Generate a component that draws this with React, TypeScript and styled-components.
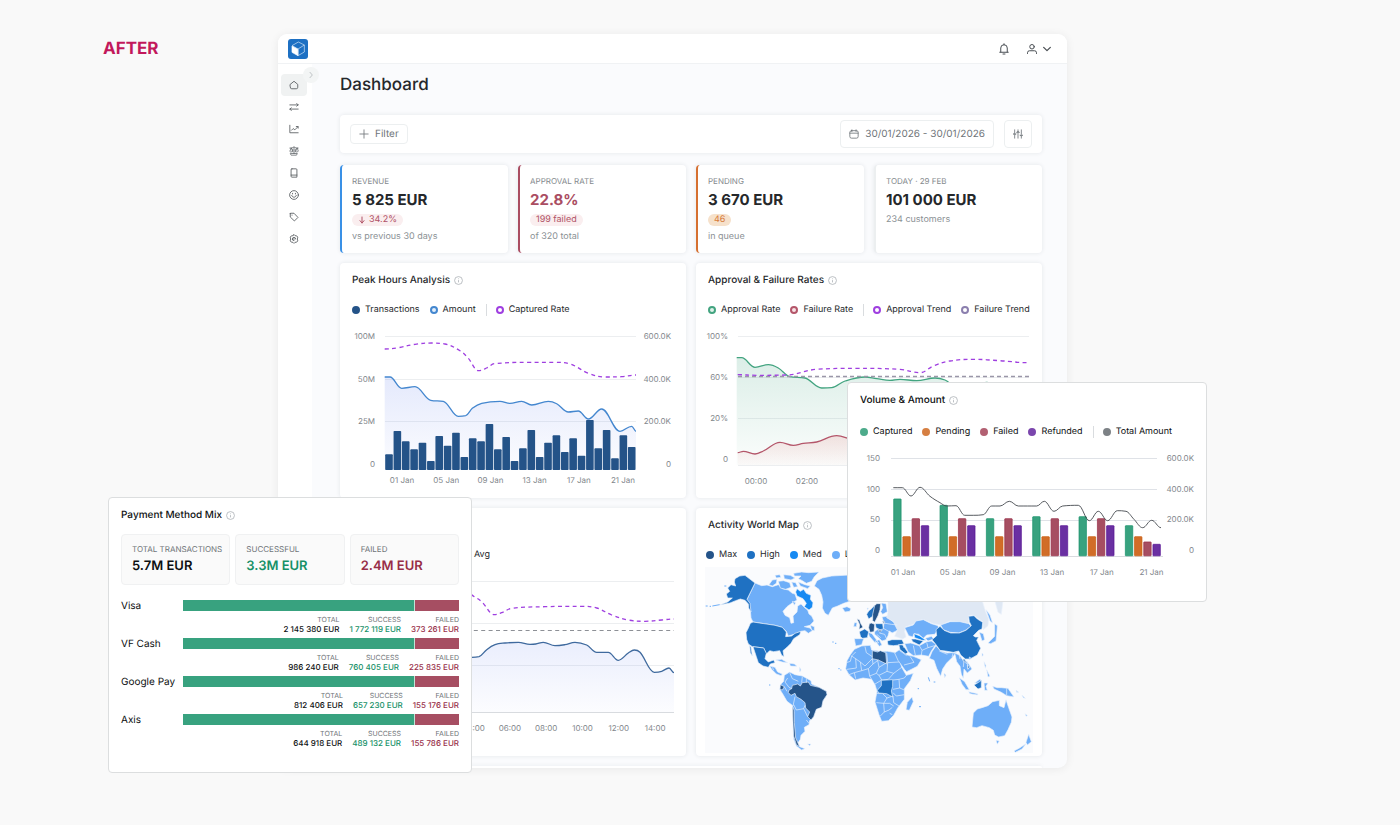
import React from "react";
import styled, { createGlobalStyle } from "styled-components";

const GlobalStyle = createGlobalStyle`
  *, *::before, *::after { box-sizing: border-box; }
  body {
    margin: 0;
    background: #f9f9f9;
    font-family: Inter, "Liberation Sans", sans-serif;
    color: #25282b;
    text-rendering: geometricPrecision;
  }
  h1, h2, p, ul, dl, dd { margin: 0; padding: 0; }
  ul { list-style: none; }
  button { font: inherit; color: inherit; cursor: pointer; text-rendering: inherit; }
  a { color: inherit; }
`;

/* ---------- page frame ---------- */

const Stage = styled.main`
  display: grid;
  grid-template-columns: 175px minmax(0, 1fr);
  padding: 34px 333px 57px 103px;
`;

const StageLabel = styled.p`
  padding-top: 4px;
  font-size: 17px;
  line-height: 22px;
  font-weight: 700;
  color: #c2185b;
`;

const Board = styled.div`
  position: relative;
`;

const AppWindow = styled.div`
  overflow: hidden;
  border-radius: 9px;
  background: #fafbfd;
  box-shadow: 0 1px 10px rgba(0, 0, 0, 0.07);
`;

const TopBar = styled.header`
  display: flex;
  align-items: center;
  justify-content: space-between;
  height: 30px;
  padding: 0 15px 0 10px;
  background: #fff;
  border-bottom: 1px solid #f0f2f4;
`;

const TopActions = styled.div`
  display: flex;
  align-items: center;
  gap: 16px;
`;

const PlainButton = styled.button`
  display: flex;
  align-items: center;
  gap: 4px;
  padding: 0;
  border: 0;
  background: none;
  color: #4a4f54;
`;

const Body = styled.div`
  display: grid;
  grid-template-columns: 34px minmax(0, 1fr);
`;

const Rail = styled.nav`
  position: relative;
  padding: 10px 3px;
  background: #fff;
`;

const RailList = styled.ul`
  display: grid;
`;

const RailLink = styled.a<{ $active?: boolean }>`
  display: flex;
  align-items: center;
  justify-content: center;
  width: 26px;
  height: 22px;
  border-radius: 4px;
  color: #54595d;
  background: ${(p) => (p.$active ? "#f0f2f2" : "transparent")};
`;

const RailToggle = styled.button`
  position: absolute;
  top: 3px;
  right: -7px;
  display: flex;
  align-items: center;
  justify-content: center;
  width: 16px;
  height: 16px;
  padding: 0;
  border: 0;
  border-radius: 50%;
  background: #f3f5f5;
  color: #a3a9ae;
`;

const Content = styled.div`
  padding: 10px 25px 0 28px;
`;

const PageTitle = styled.h1`
  margin-bottom: 19px;
  font-size: 17px;
  line-height: 22px;
  font-weight: 500;
`;

/* ---------- filter bar ---------- */

const surface = `
  background: #fff;
  border-radius: 4px;
  box-shadow: 0 0 4px rgba(30, 50, 70, 0.1);
`;

const FilterBar = styled.div`
  ${surface}
  display: flex;
  align-items: center;
  gap: 10px;
  height: 38px;
  margin-bottom: 12px;
  padding: 0 10px;
`;

const FilterButton = styled.button<{ $tall?: boolean; $push?: boolean }>`
  display: flex;
  align-items: center;
  gap: 6px;
  height: ${(p) => (p.$tall ? 28 : 20)}px;
  margin-left: ${(p) => (p.$push ? "auto" : 0)};
  padding: 0 8px;
  border: 1px solid #eceff0;
  border-radius: 4px;
  background: #fff;
  font-size: 10px;
  line-height: 14px;
  color: #6f7579;
`;

/* ---------- figures ---------- */

const KpiGrid = styled.section`
  display: grid;
  grid-template-columns: repeat(4, minmax(0, 1fr));
  gap: 10px;
  margin-bottom: 10px;
`;

const KpiCard = styled.article<{ $accent: string }>`
  ${surface}
  height: 88px;
  padding: 10px 10px 0;
  border-left: 2px solid ${(p) => p.$accent};
`;

const KpiLabel = styled.p`
  font-size: 8px;
  line-height: 12px;
  color: #84898d;
`;

const KpiValue = styled.p<{ $tone?: string }>`
  margin: 4px 0 5px;
  font-size: 15px;
  line-height: 18px;
  font-weight: 700;
  color: ${(p) => p.$tone ?? "#25282b"};
`;

const KpiPill = styled.span<{ $bg: string; $tone: string }>`
  display: flex;
  align-items: center;
  gap: 3px;
  width: fit-content;
  height: 12px;
  margin-bottom: 5px;
  padding: 0 6px;
  border-radius: 6px;
  font-size: 9px;
  line-height: 12px;
  background: ${(p) => p.$bg};
  color: ${(p) => p.$tone};
`;

const KpiNote = styled.p`
  font-size: 9px;
  line-height: 12px;
  color: #8b9195;
`;

/* ---------- cards ---------- */

const CardGrid = styled.section`
  display: grid;
  grid-template-columns: repeat(2, minmax(0, 1fr));
  gap: 10px;
`;

const Card = styled.article`
  ${surface}
  min-width: 0;
  padding-bottom: 8px;
`;

const MapCard = styled(Card)`
  padding-bottom: 3px;
`;

const NextRow = styled.div`
  ${surface}
  height: 2px;
  margin-top: 10px;
  border-radius: 4px 4px 0 0;
`;

const CardTitle = styled.h2`
  display: flex;
  align-items: center;
  gap: 4px;
  padding: 10px 12px 0;
  font-size: 10px;
  line-height: 14px;
  font-weight: 500;
  color: inherit;
`;

const LegendList = styled.ul<{ $inset?: number; $roomy?: boolean }>`
  display: flex;
  align-items: center;
  gap: 10px;
  padding: ${(p) => (p.$roomy ? "18px" : "16px")} ${(p) => p.$inset ?? 12}px 9px;
  font-size: 9px;
  line-height: 14px;
  white-space: nowrap;
`;

const LegendItem = styled.li<{ $split?: boolean }>`
  display: flex;
  align-items: center;
  gap: 5px;
  ${(p) =>
    p.$split &&
    `
    &::before {
      content: "";
      width: 1px;
      height: 12px;
      margin-right: 4px;
      background: #d9dcdf;
    }
  `}
`;

const Dot = styled.span<{ $color: string; $ring?: string }>`
  width: 8px;
  height: 8px;
  border-radius: 50%;
  border: 2px solid ${(p) => p.$color};
  background: ${(p) => p.$ring ?? p.$color};
`;

const Plot = styled.svg`
  display: block;
  width: 100%;
  height: auto;
`;

const AxisText = styled.text`
  font-size: 8px;
  fill: #81868b;
  dominant-baseline: central;
`;

const MapFrame = styled.div`
  margin-top: -4px;
  padding: 0 9px;
`;

const Overlay = styled.article`
  position: absolute;
  border: 1px solid #dcdedf;
  border-radius: 4px;
  background: #fff;
  color: #0d0f11;
`;

const VolumeOverlay = styled(Overlay)`
  top: 348px;
  right: -140px;
  width: 360px;
  padding-bottom: 15px;
`;

const PaymentOverlay = styled(Overlay)`
  top: 463px;
  left: -170px;
  width: 364px;
  height: 276px;
`;

/* ---------- payment mix ---------- */

const StatRow = styled.div`
  display: grid;
  grid-template-columns: repeat(3, minmax(0, 1fr));
  gap: 5px;
  padding: 12px 12px 15px;
`;

const Stat = styled.div`
  height: 51px;
  padding: 8px 10px;
  border: 1px solid #f0f1f2;
  border-radius: 4px;
  background: #fafafa;
`;

const StatLabel = styled.p`
  margin-bottom: 3px;
  font-size: 8px;
  line-height: 12px;
  color: #6f7478;
  white-space: nowrap;
`;

const StatValue = styled.p<{ $tone: string }>`
  font-size: 13px;
  line-height: 16px;
  font-weight: 600;
  color: ${(p) => p.$tone};
`;

const MethodRow = styled.li`
  display: grid;
  grid-template-columns: 62px minmax(0, 1fr);
  height: 38px;
  padding: 0 12px;
`;

const MethodName = styled.span`
  font-size: 10px;
  line-height: 12px;
`;

const Bar = styled.div`
  display: flex;
  gap: 1px;
  height: 11px;
  background: #bfe3d5;
`;

const BarPart = styled.span<{ $color: string }>`
  background: ${(p) => p.$color};
`;

const Amounts = styled.dl`
  display: flex;
  justify-content: flex-end;
  gap: 10px;
  padding-top: 4px;
  text-align: right;
`;

const AmountLabel = styled.dt`
  font-size: 7px;
  line-height: 10px;
  color: #6f7478;
`;

const AmountValue = styled.dd<{ $tone: string }>`
  font-size: 8px;
  line-height: 9px;
  font-weight: 500;
  color: ${(p) => p.$tone};
`;

/* ---------- icons ---------- */

const Icon = ({ size = 10, weight = 2, children }: { size?: number; weight?: number; children: React.ReactNode }) => (
  <svg width={size} height={size} viewBox="0 0 24 24" fill="none" stroke="currentColor" strokeWidth={weight} strokeLinecap="round" strokeLinejoin="round" aria-hidden="true">
    {children}
  </svg>
);

const InfoIcon = () => (
  <svg width="9" height="9" viewBox="0 0 24 24" fill="none" stroke="#a7acb1" strokeWidth="2" aria-hidden="true">
    <circle cx="12" cy="12" r="10.5" />
    <path d="M12 11v6M12 6.5v2" />
  </svg>
);

const Logo = () => (
  <svg width="20" height="20" viewBox="0 0 60 60" aria-label="Home" role="img">
    <rect width="60" height="60" rx="9" fill="#1d70c3" />
    <path d="M12 21 30 31v19L12 40Z" fill="#fff" stroke="#fff" strokeWidth="2" strokeLinejoin="round" />
    <path d="M12 20 31 9l18 9v21L30 50V30l19-12M12 20l18 10" fill="none" stroke="#d6e7f8" strokeWidth="2" strokeLinejoin="round" />
  </svg>
);

const railIcons: { name: string; art: React.ReactNode }[] = [
  { name: "Dashboard", art: <path d="M3 10.500 12 3l9 7.500v7a3.500 3.500 0 0 1-3.500 3.500h-11A3.500 3.500 0 0 1 3 17.500Z" /> },
  { name: "Transfers", art: <path d="M2 7h20M18.500 3.500 22 7l-3.500 3M22 17H2M5.500 14 2 17l3.500 3.500" /> },
  { name: "Analytics", art: <path d="M2 3v18h20M6 15l4-4 4 3 7-7M17.500 6H22v4" /> },
  {
    name: "Balances",
    art: <path d="M2 5h5l5-3 5 3h5M5 5l-3 8c1 2 5 2 6 0ZM19 5l-3 8c1 2 5 2 6 0ZM12 3v15M4 18h16l-2 4H6ZM9 8v6M15 8v6" strokeWidth="1.7" />,
  },
  { name: "Ledger", art: <path d="M7 2h10a2 2 0 0 1 2 2v18H7a2 2 0 0 1-2-2V4a2 2 0 0 1 2-2ZM5 17h14" /> },
  {
    name: "Customers",
    art: (
      <>
        <circle cx="12" cy="12" r="10.5" />
        <path d="M6.500 13c1.500 6 9.500 6 11 0M8.500 8v1.500M15.500 8v1.500" />
      </>
    ),
  },
  { name: "Offers", art: <path d="M3 4v8l10 9.500 8.500-8.500L12 3H4a1 1 0 0 0-1 1ZM7 7.500h.5" /> },
  {
    name: "Settings",
    art: (
      <>
        <path d="M12 1.500 14.500 4l4 .5 2.500 3-1 4.500 1 4.500-2.500 3-4 .5L12 22.500 9.500 20l-4-.5-2.500-3 1-4.500-1-4.500 2.500-3 4-.5Z" />
        <path d="M8 12a4 4 0 0 1 8 0M12 16a4 4 0 0 1-4-4h5" />
      </>
    ),
  },
];

/* ---------- chart helpers ---------- */

type Pt = [number, number];

// Series are stored at three units per pixel and shifted into the plot's own space.
const place = (pts: Pt[], dx: number, dy: number): Pt[] => pts.map(([x, y]) => [x / 3 + dx, y / 3 + dy]);

// Smooth path whose control points stay level at every local extreme.
const curve = (pts: Pt[]) => {
  const n = pts.length;
  const slope = pts.map((p, i) => {
    if (i === 0 || i === n - 1) return 0;
    const a = (p[1] - pts[i - 1][1]) / (p[0] - pts[i - 1][0]);
    const b = (pts[i + 1][1] - p[1]) / (pts[i + 1][0] - p[0]);
    if (a * b <= 0) return 0;
    const mean = (pts[i + 1][1] - pts[i - 1][1]) / (pts[i + 1][0] - pts[i - 1][0]);
    return Math.sign(mean) * Math.min(Math.abs(mean), 2.500 * Math.abs(a), 2.500 * Math.abs(b));
  });
  let d = `M${pts[0][0].toFixed(1)} ${pts[0][1].toFixed(1)}`;
  for (let i = 1; i < n; i++) {
    const [x0, y0] = pts[i - 1];
    const [x1, y1] = pts[i];
    const h = (x1 - x0) * 0.38;
    d += `C${(x0 + h).toFixed(1)} ${(y0 + slope[i - 1] * h).toFixed(1)} ${(x1 - h).toFixed(1)} ${(y1 - slope[i] * h).toFixed(1)} ${x1.toFixed(1)} ${y1.toFixed(1)}`;
  }
  return d;
};

const area = (pts: Pt[], base: number) => `${curve(pts)}V${base}H${pts[0][0].toFixed(1)}Z`;

const Fade = ({ id, color, from }: { id: string; color: string; from: number }) => (
  <linearGradient id={id} x1="0" y1="0" x2="0" y2="1">
    <stop offset="0" stopColor={color} stopOpacity={from} />
    <stop offset="1" stopColor={color} stopOpacity="0.02" />
  </linearGradient>
);

const Grid = ({ x1, x2, ys, color = "#eceef0" }: { x1: number; x2: number; ys: number[]; color?: string }) => (
  <g stroke={color}>
    {ys.map((y) => (
      <path key={y} d={`M${x1} ${y}H${x2}`} />
    ))}
  </g>
);

const Axis = ({ labels, x, y, dx = 0, dy = 0, anchor = "end" }: { labels: string[]; x: number; y: number; dx?: number; dy?: number; anchor?: "end" | "middle" }) => (
  <>
    {labels.map((label, i) => (
      <AxisText key={label} x={x + dx * i} y={y + dy * i} textAnchor={anchor}>
        {label}
      </AxisText>
    ))}
  </>
);

const days = ["01 Jan", "05 Jan", "09 Jan", "13 Jan", "17 Jan", "21 Jan"];

/* ---------- Peak hours ---------- */

const peakBars = [583, 513, 544, 568, 548, 603, 528, 557, 518, 591, 535, 544, 492, 568, 531, 603, 565, 510, 591, 548, 526, 576, 535, 587, 480, 565, 510, 595, 526, 561];

const amountLine = place(
  [[149, 351], [165, 351], [200, 385], [240, 380], [287, 421], [325, 424], [370, 469], [392, 467], [412, 445], [440, 430], [495, 424], [525, 430], [560, 424], [590, 435], [640, 424], [665, 431], [700, 456], [730, 453], [760, 477], [800, 447], [855, 514], [890, 499], [903, 514]],
  -5,
  -66,
);

const capturedLine = place(
  [[149, 267], [190, 263], [240, 253], [290, 249], [330, 252], [375, 272], [400, 295], [430, 332], [455, 324], [478, 311], [580, 307], [660, 307], [705, 312], [760, 340], [810, 351], [860, 350], [903, 345]],
  -5,
  -66,
);

const PeakChart = () => (
  <Plot viewBox="0 0 346 164" role="img" aria-label="Peak hours chart">
    <defs>
      <Fade id="peak-fill" color="#5877ec" from={0.16} />
    </defs>
    <Grid x1={45} x2={296} ys={[10.5, 53.5, 95.5]} />
    <path d={area(amountLine, 144)} fill="url(#peak-fill)" />
    {peakBars.map((top, i) => (
      <rect key={i} x={45.2 + i * 8.37} y={top / 3 - 66} width="7.6" height={210 - top / 3} rx="0.8" fill="#245388" />
    ))}
    <path d={curve(amountLine)} fill="none" stroke="#4487cf" strokeWidth="1.3" />
    <path d={curve(capturedLine)} fill="none" stroke="#9f3fe0" strokeWidth="1.3" strokeDasharray="4 3.4" />
    <Axis labels={["100M", "50M", "25M", "0"]} x={35} y={10} dy={42.5} />
    <Axis labels={["600.0K", "400.0K", "200.0K", "0"]} x={331} y={10} dy={42.5} />
    <Axis labels={days} x={62} y={154} dx={44.2} anchor="middle" />
  </Plot>
);

/* ---------- Approval and failure ---------- */

const approvalLine = place(
  [[140, 293], [155, 293], [195, 322], [235, 314], [265, 324], [300, 350], [345, 354], [395, 384], [425, 383], [465, 363], [525, 351], [560, 356], [600, 361], [630, 358], [680, 362], [735, 354], [765, 360], [790, 376], [840, 390], [890, 367], [940, 390], [1017, 410]],
  -6,
  -66,
);

const failureLine = place(
  [[143, 578], [160, 574], [195, 582], [220, 573], [270, 547], [310, 556], [340, 550], [380, 546], [440, 527], [480, 537], [560, 560], [700, 550], [1017, 570]],
  -6,
  -66,
);

const approvalTrend = place(
  [[143, 344], [200, 346], [290, 345], [380, 328], [500, 325], [630, 328], [690, 338], [730, 318], [780, 303], [850, 298], [930, 302], [1017, 308]],
  -6,
  -66,
);

const RatesChart = () => (
  <Plot viewBox="0 0 346 164" role="img" aria-label="Approval and failure rates chart">
    <defs>
      <Fade id="approval-fill" color="#2d9a72" from={0.17} />
      <Fade id="failure-fill" color="#e04b4b" from={0.14} />
    </defs>
    <Grid x1={42} x2={333} ys={[10.5, 51.5, 92.5, 139.5]} />
    <path d={area(approvalLine, 139)} fill="url(#approval-fill)" />
    <path d={area(failureLine, 139)} fill="url(#failure-fill)" />
    <path d={curve(approvalLine)} fill="none" stroke="#43a480" strokeWidth="1.3" />
    <path d={curve(failureLine)} fill="none" stroke="#b4566a" strokeWidth="1.3" />
    <path d="M42 50.500H333" stroke="#9a96a8" strokeWidth="1.3" strokeDasharray="4 3" />
    <path d={curve(approvalTrend)} fill="none" stroke="#9f3fe0" strokeWidth="1.3" strokeDasharray="4 3.4" />
    <Axis labels={["100%", "60%", "20%", "0"]} x={32} y={10} dy={41} />
    <Axis labels={["00:00", "02:00"]} x={60} y={155} dx={51} anchor="middle" />
  </Plot>
);

/* ---------- Hourly traffic ---------- */

const trafficLine = place(
  [[-240, 350], [-160, 380], [-80, 424], [-20, 460], [0, 470], [20, 472], [42, 470], [65, 449], [90, 434], [120, 429], [160, 427], [195, 433], [212, 432], [235, 427], [270, 437], [300, 434], [330, 427], [365, 435], [395, 457], [430, 457], [460, 481], [490, 459], [508, 450], [525, 457], [568, 517], [590, 514], [612, 504], [627, 518]],
  125,
  -71,
);

const trafficTrend = place(
  [[-240, 267], [-80, 250], [0, 272], [28, 290], [50, 305], [88, 344], [110, 338], [140, 325], [240, 320], [350, 319], [395, 324], [440, 345], [490, 360], [540, 364], [590, 360], [627, 357]],
  125,
  -71,
);

const TrafficChart = () => (
  <Plot viewBox="0 0 346 170" role="img" aria-label="Hourly traffic chart">
    <Grid x1={45} x2={334} ys={[10.5, 52.5, 94.5]} />
    <Grid x1={45} x2={334} ys={[141.5]} color="#d8dbdf" />
    <path d={area(trafficLine, 141)} fill="url(#peak-fill)" />
    <path d="M45 59.500H334" stroke="#8d9096" strokeWidth="1.2" strokeDasharray="4 3.4" />
    <path d={curve(trafficLine)} fill="none" stroke="#3f6a9e" strokeWidth="1.3" />
    <path d={curve(trafficTrend)} fill="none" stroke="#9f3fe0" strokeWidth="1.3" strokeDasharray="4 3.4" />
    <Axis labels={["04:00", "06:00", "08:00", "10:00", "12:00", "14:00"]} x={133.6} y={157} dx={36.3} anchor="middle" />
  </Plot>
);

/* ---------- Volume ---------- */

const volumeBars: { color: string; edge: string; tops: number[] }[] = [
  { color: "#38a27f", edge: "#17906a", tops: [371, 390, 430, 424, 424, 451] },
  { color: "#d16d28", edge: "#c95a0c", tops: [484, 484, 484, 484, 484, 484] },
  { color: "#a64e62", edge: "#982e48", tops: [430, 430, 430, 430, 430, 500] },
  { color: "#6a30a2", edge: "#571293", tops: [451, 451, 451, 451, 451, 507] },
];

const totalLine = place(
  [[160, 338], [187, 338], [213, 363], [240, 337], [270, 364], [300, 383], [320, 393], [348, 392], [374, 421], [400, 421], [430, 419], [455, 393], [480, 393], [508, 379], [535, 393], [590, 393], [613, 379], [642, 409], [668, 393], [715, 391], [748, 437], [775, 409], [803, 437], [832, 407], [858, 409], [882, 433], [908, 458], [935, 436], [963, 458]],
  -8,
  -73,
);

const VolumeChart = () => (
  <Plot viewBox="0 0 358 138" role="img" aria-label="Volume and amount chart">
    <Grid x1={43} x2={309} ys={[10.5, 41.5, 72.5]} color="#dfe2e7" />
    <path d="M43 108.500H315" stroke="#d9dbdf" />
    {volumeBars.map((series, s) =>
      series.tops.map((top, g) => (
        <rect key={`${s}-${g}`} x={45.7 + g * 46.33 + s * 9.2} y={top / 3 - 72.7} width="7.4" height={180.5 - top / 3} rx="0.5" fill={series.color} stroke={series.edge} strokeWidth="0.7" />
      )),
    )}
    <path d={curve(totalLine)} fill="none" stroke="#44484e" strokeWidth="0.9" />
    <Axis labels={["150", "100", "50", "0"]} x={32} y={10} dy={30.6} />
    <Axis labels={["600.0K", "400.0K", "200.0K", "0"]} x={346} y={10} dy={30.6} />
    <Axis labels={days} x={55} y={124} dx={49.7} anchor="middle" />
  </Plot>
);

/* ---------- World map ---------- */

const low = "#6eaef8";
const med = "#178af2";
const high = "#1f71c2";
const max = "#255489";
const none = "#dfe8f4";

const westShapes: [string, string][] = [
  // Canada, its arctic islands, Greenland, Iceland
  [low, "M180 231 200 239 216 237 232 242 250 236 262 248 280 252 292 262 300 264 306 282 290 292 276 302 264 316 270 328 284 335 288 352 296 350 294 330 306 318 308 300 318 294 330 306 338 312 342 324 350 330 357 345 345 358 328 362 345 366 352 374 340 382 330 374 318 376 300 384 280 390 274 376 262 364 240 358 174 348 168 336 166 312 160 290 156 280Z"],
  [low, "M222 236 232 222 246 220 244 232 232 240ZM250 226 266 224 284 230 288 244 272 250 256 246ZM240 208 254 206 258 214 244 216ZM266 206 286 208 300 216 288 222 268 218ZM290 228 302 230 308 242 296 244ZM296 202 320 198 340 200 372 198 358 212 350 226 334 232 322 224 310 218 318 210 298 210ZM310 228 330 236 346 240 338 248 316 240ZM292 286 302 290 298 298Z"],
  [low, "M358 240 366 224 382 216 410 210 500 205 490 262 470 284 446 292 428 300 412 306 400 328 390 322 382 306 384 288 380 268 372 250Z"],
  [low, "M442 306 456 302 468 308 464 316 450 318ZM346 358 358 362 358 374 350 372Z"],
  [med, "M306 248 316 256 326 250 334 262 348 268 346 280 354 290 352 304 342 312 328 302 334 292 324 278 306 270 302 258Z"],
  // Alaska, United States, Mexico, Central America
  [high, "M120 218 134 210 150 208 180 231 156 280 165 292 168 318 161 306 160 294 150 283 136 279 122 284 105 291 74 297 98 288 112 276 98 276 94 264 104 256 98 246 108 236 122 240 118 228Z"],
  [high, "M174 348 240 358 262 364 274 378 272 392 290 390 300 382 318 376 314 386 296 398 288 412 276 424 264 434 267 452 260 448 254 434 236 437 224 434 214 444 206 426 190 424 172 422 160 414 155 400 153 380 160 366 166 352Z"],
  [high, "M164 418 168 424 172 450 166 440ZM174 422 206 426 214 442 210 458 220 468 236 462 240 470 226 474 220 484 204 480 190 470 184 452Z"],
  [low, "M224 480 240 484 248 498 262 504 258 509 244 504 230 490ZM242 462 260 460 278 470 262 468ZM284 472 298 474 306 481 286 480ZM314 484 318 492 314 498Z"],
  // South America
  [low, "M268 508 284 498 300 506 322 510 348 524 350 534 372 544 394 556 396 566 384 584 380 600 364 610 356 632 344 644 342 656 328 664 330 676 318 688 316 700 308 712 314 722 330 728 320 732 304 720 296 700 294 660 296 620 292 598 276 586 262 562 254 550 258 534 266 526ZM338 714 348 714 344 719Z"],
  [max, "M292 538 308 534 316 540 322 530 340 528 346 538 372 544 394 556 396 566 384 584 380 604 364 610 356 632 348 642 338 632 344 618 332 606 330 590 318 580 304 572 300 562 288 568 280 560 282 552 290 548Z"],
  [max, "M292 600 297 612 298 650 302 696 314 722 304 716 296 690 294 650ZM256 536 268 542 262 552 255 550Z"],
  // Western Europe
  [max, "M486 338 494 342 496 350 504 364 492 370 494 356Z"],
  [low, "M478 350 486 350 484 362 476 362ZM478 398 506 398 500 416 482 420ZM516 306 520 306 518 312Z"],
  // Africa
  [low, "M478 430 500 420 526 418 530 432 556 436 578 436 604 440 612 456 620 484 634 508 655 502 646 524 628 548 628 580 608 606 596 628 580 644 560 646 552 626 540 588 546 556 540 536 530 520 504 516 480 522 462 506 452 488 456 464 466 446Z"],
  [max, "M532 434 548 438 556 434 572 440 575 474 550 462 532 458Z"],
];

const eastShapes: [string, string][] = [
  [high, "M64 268 98 266 98 286 94 300 98 318 80 308 56 306 52 298 64 284Z"],
  [low, "M156 318 160 332 148 358 138 356 142 334Z"],
  // Northern and central Europe
  [high, "M20 70 26 60 36 52 44 42 48 48 38 76 26 84Z"],
  [max, "M44 44 50 38 62 38 60 56 54 74 44 94 38 88 38 70Z"],
  [low, "M64 36 78 38 82 62 68 70 62 62 68 50ZM66 78 80 76 90 84 100 92 112 100 116 116 104 122 96 126 88 120 84 134 78 146 66 150 58 142 44 130 44 122 54 114 70 112 72 96ZM24 124 36 128 46 142 56 156 44 154 28 136ZM46 150 58 146 66 162 58 166Z"],
  [max, "M28 98 34 96 44 100 42 122 30 124 26 110ZM54 118 66 118 60 124ZM66 90 74 92 72 98Z"],
  [high, "M46 98 68 98 70 114 60 116 48 110ZM-2 122 14 114 26 122 22 140 8 142 2 138Z"],
  // Russia
  [none, "M84 20 364 20 376 60 386 84 384 104 370 116 368 92 340 72 326 74 326 98 290 92 270 90 244 102 220 98 190 86 170 90 160 100 136 108 134 122 138 138 128 144 104 136 112 116 100 92 80 80 84 64ZM402 20 430 20 424 70 414 64Z"],
  // Middle East and Central Asia
  [high, "M82 150 96 146 126 146 132 158 118 162 100 164 84 162ZM116 160 128 162 144 184 136 190 120 176Z"],
  [low, "M134 110 160 102 168 90 190 86 214 98 234 104 236 114 224 130 200 132 190 142 176 130 162 128 158 138 146 134ZM134 158 152 156 178 164 200 152 214 150 228 160 214 180 206 196 184 192 160 194 144 182ZM104 186 118 176 142 192 160 196 184 206 172 226 140 242 134 236 114 208ZM196 142 214 136 222 144 204 150Z"],
  [med, "M162 128 178 134 198 148 186 148 164 140Z"],
  [high, "M154 144 166 144 190 150 178 162 158 152Z"],
  [low, "M228 164 242 180 262 186 290 184 276 200 260 216 248 234 242 256 230 232 222 208 208 202 216 182ZM252 246 258 252 254 260Z"],
  // East Asia
  [low, "M242 102 270 92 300 92 326 98 334 106 316 118 296 126 270 124 250 116Z"],
  [high, "M240 106 252 118 272 126 298 126 318 118 334 104 328 92 326 76 342 74 352 84 368 94 366 114 356 118 340 134 346 138 356 138 350 148 362 172 352 192 330 204 316 204 302 192 296 180 280 184 256 180 240 178 226 158 216 146 230 134 228 116Z"],
  [low, "M358 124 370 128 374 146 366 150ZM404 98 412 104 410 132 408 150 392 158 384 156 404 136ZM378 56 390 72 398 96 390 90Z"],
  [low, "M284 186 298 192 308 206 322 212 336 234 322 246 312 234 310 262 304 250 300 226 290 212ZM298 260 314 272 328 296 318 296 306 280ZM326 302 352 308 354 312 330 308ZM372 212 378 224 376 232ZM380 236 390 256 384 258ZM372 276 384 276 378 286 382 298 374 298ZM398 286 412 290 424 290 444 292 462 318 440 314 424 304 402 294ZM344 276 360 264 366 276Z"],
  [high, "M342 282 356 274 364 268 364 290 354 294ZM306 206 314 204 320 218ZM322 222 330 228 324 234Z"],
  // Oceania
  [low, "M340 366 352 354 366 350 384 344 398 332 418 328 418 344 432 350 438 326 446 350 456 378 454 394 444 416 434 434 416 438 404 432 400 418 388 410 366 404 350 410 336 408ZM408 448 418 450 412 460ZM506 430 514 452 502 462 498 454ZM498 458 486 474 466 484 462 480 480 470ZM468 298 476 304 470 304ZM486 312 496 322 490 320ZM496 368 502 374 498 376ZM328 198 334 202 328 206ZM366 186 370 192 366 196Z"],
];

const borders =
  "M284 500 292 518 310 526M278 516 270 528 282 544 290 548M322 512 320 530M334 518 334 530M268 542 276 556M300 572 294 600M296 596 304 612 326 608 330 598M326 608 338 632M334 642 342 652M232 484 236 492" +
  "M482 438 470 450 466 466 454 470M470 450 496 468 510 480 532 458M510 422 514 440 532 452M482 458 484 486 456 490M496 468 500 494 478 500 482 518M462 506 478 500M500 494 520 488 534 474 532 458M520 488 524 510 530 520M534 474 550 462M524 510 544 502 552 484 548 464M575 470 552 484M575 440 578 470 612 468M578 470 576 496 596 502 612 490 620 484M552 508 576 496M540 534 560 522 552 508 544 502M560 522 580 520 596 502M594 522 612 520 628 516 634 508M612 520 614 546 628 552M614 546 594 550M594 560 604 570 628 566M594 570 596 590 612 600M544 562 562 562 576 576 594 570M544 590 566 592 576 576M566 592 568 618 556 630M566 592 584 592 596 600M568 618 582 612 592 604M584 622 592 626";

const asiaBorders =
  "M160 164 166 192M178 164 186 178 184 192M200 154 204 170 186 178M204 170 224 164M118 178 140 194M132 222 162 214M150 196 162 214M296 186 300 204M312 206 310 228M322 212 324 236M440 292V312M224 130 206 136M134 160 130 170M70 112 84 120 96 126M58 126 74 130 80 144M70 96 94 100 112 102M50 130 62 140M280 184 276 198M238 180 262 190";

const WorldMap = () => (
  <Plot viewBox="30 183 984 558" role="img" aria-label="World map of activity">
    <rect x="30" y="183" width="984" height="558" fill="#fafbfd" />
    <g stroke="#eaf2fc" strokeWidth="2" strokeLinejoin="round">
      {westShapes.map(([fill, d], i) => (
        <path key={i} d={d} fill={fill} />
      ))}
      <path d={borders} fill="none" />
      <g transform="translate(495 255)">
        {eastShapes.map(([fill, d], i) => (
          <path key={i} d={d} fill={fill} />
        ))}
        <path d={asiaBorders} fill="none" />
      </g>
    </g>
    <path d="M32 300h6M44 301h4M52 300l22-4M88 240h6M222 537h4M412 408h4M420 412h4M430 488h4M436 492h3M700 514l4 12M716 528h5M668 548h4M672 602h6" stroke={low} strokeWidth="3" fill="none" />
  </Plot>
);

/* ---------- content ---------- */

type LegendEntry = { label: string; color: string; ring?: string; split?: boolean };

const Legend = ({ items, inset, roomy }: { items: LegendEntry[]; inset?: number; roomy?: boolean }) => (
  <LegendList $inset={inset} $roomy={roomy}>
    {items.map((item) => (
      <LegendItem key={item.label} $split={item.split}>
        <Dot $color={item.color} $ring={item.ring} />
        {item.label}
      </LegendItem>
    ))}
  </LegendList>
);

const Title = ({ children }: { children: React.ReactNode }) => (
  <CardTitle>
    {children}
    <InfoIcon />
  </CardTitle>
);

const stats = [
  { label: "TOTAL TRANSACTIONS", value: "5.7M EUR", tone: "#0d0f11" },
  { label: "SUCCESSFUL", value: "3.3M EUR", tone: "#159067" },
  { label: "FAILED", value: "2.4M EUR", tone: "#982e48" },
];

const methods = [
  { name: "Visa", total: "2 145 380 EUR", success: "1 772 119 EUR", failed: "373 261 EUR", share: 84 },
  { name: "VF Cash", total: "986 240 EUR", success: "760 405 EUR", failed: "225 835 EUR", share: 84 },
  { name: "Google Pay", total: "812 406 EUR", success: "657 230 EUR", failed: "155 176 EUR", share: 84 },
  { name: "Axis", total: "644 918 EUR", success: "489 132 EUR", failed: "155 786 EUR", share: 84 },
];

const PaymentMix = () => (
  <PaymentOverlay>
    <Title>Payment Method Mix</Title>
    <StatRow>
      {stats.map((s) => (
        <Stat key={s.label}>
          <StatLabel>{s.label}</StatLabel>
          <StatValue $tone={s.tone}>{s.value}</StatValue>
        </Stat>
      ))}
    </StatRow>
    <ul>
      {methods.map((m) => (
        <MethodRow key={m.name}>
          <MethodName>{m.name}</MethodName>
          <div>
            <Bar>
              <BarPart $color="#38a27f" style={{ flexGrow: m.share }} />
              <BarPart $color="#a64e62" style={{ flexGrow: 100 - m.share }} />
            </Bar>
            <Amounts>
              <div>
                <AmountLabel>TOTAL</AmountLabel>
                <AmountValue $tone="#0d0f11">{m.total}</AmountValue>
              </div>
              <div>
                <AmountLabel>SUCCESS</AmountLabel>
                <AmountValue $tone="#159067">{m.success}</AmountValue>
              </div>
              <div>
                <AmountLabel>FAILED</AmountLabel>
                <AmountValue $tone="#982e48">{m.failed}</AmountValue>
              </div>
            </Amounts>
          </div>
        </MethodRow>
      ))}
    </ul>
  </PaymentOverlay>
);

export default function App() {
  return (
    <>
      <GlobalStyle />
      <Stage>
        <StageLabel>AFTER</StageLabel>
        <Board>
          <AppWindow>
            <TopBar>
              <Logo />
              <TopActions>
                <PlainButton aria-label="Notifications">
                  <Icon size={12}>
                    <path d="M5.500 18V10a6.500 6.500 0 0 1 13 0v8M3.500 18.500h17M10 22h4M12 1.500v2" />
                  </Icon>
                </PlainButton>
                <PlainButton aria-label="Account">
                  <Icon size={12}>
                    <circle cx="12" cy="7.5" r="4.500" />
                    <path d="M3 21v-1.500a4 4 0 0 1 4-4h10a4 4 0 0 1 4 4V21" />
                  </Icon>
                  <Icon size={10} weight={3}>
                    <path d="m4 8 8 8 8-8" />
                  </Icon>
                </PlainButton>
              </TopActions>
            </TopBar>
            <Body>
              <Rail aria-label="Main">
                <RailList>
                  {railIcons.map((item, i) => (
                    <li key={item.name}>
                      <RailLink href="#" $active={i === 0} aria-label={item.name}>
                        <Icon>{item.art}</Icon>
                      </RailLink>
                    </li>
                  ))}
                </RailList>
                <RailToggle aria-label="Expand menu">
                  <Icon size={8}>
                    <path d="m9 4 7 8-7 8" />
                  </Icon>
                </RailToggle>
              </Rail>
              <Content>
                <PageTitle>Dashboard</PageTitle>
                <FilterBar>
                  <FilterButton>
                    <Icon>
                      <path d="M12 2v20M2 12h20" />
                    </Icon>
                    Filter
                  </FilterButton>
                  <FilterButton $tall $push>
                    <Icon>
                      <rect x="2" y="4" width="20" height="18" rx="4" />
                      <path d="M2 10h20M7 2v4M17 2v4" />
                    </Icon>
                    30/01/2026 - 30/01/2026
                  </FilterButton>
                  <FilterButton $tall aria-label="Adjust columns">
                    <Icon>
                      <path d="M4 2v9M4 16v6M12 2v4M12 10v12M20 2v11M20 17v5M1 12h6M9 8h6M17 15h6M2 12l2 3 2-3M18 15l2 2 2-2M10 8l2-3 2 3" />
                    </Icon>
                  </FilterButton>
                </FilterBar>
                <KpiGrid>
                  <KpiCard $accent="#3990e6">
                    <KpiLabel>REVENUE</KpiLabel>
                    <KpiValue>5 825 EUR</KpiValue>
                    <KpiPill $bg="#faeeef" $tone="#b05266">
                      <Icon size={8} weight={3}>
                        <path d="M12 3v18M6 14l6 7 6-7" />
                      </Icon>
                      34.2%
                    </KpiPill>
                    <KpiNote>vs previous 30 days</KpiNote>
                  </KpiCard>
                  <KpiCard $accent="#aa4d62">
                    <KpiLabel>APPROVAL RATE</KpiLabel>
                    <KpiValue $tone="#aa4d62">22.8%</KpiValue>
                    <KpiPill $bg="#faeeef" $tone="#b05266">
                      199 failed
                    </KpiPill>
                    <KpiNote>of 320 total</KpiNote>
                  </KpiCard>
                  <KpiCard $accent="#d67031">
                    <KpiLabel>PENDING</KpiLabel>
                    <KpiValue>3 670 EUR</KpiValue>
                    <KpiPill $bg="#f6e1cb" $tone="#d67a3a">
                      46
                    </KpiPill>
                    <KpiNote>in queue</KpiNote>
                  </KpiCard>
                  <KpiCard $accent="#eceff0">
                    <KpiLabel>TODAY · 29 FEB</KpiLabel>
                    <KpiValue>101 000 EUR</KpiValue>
                    <KpiNote>234 customers</KpiNote>
                  </KpiCard>
                </KpiGrid>
                <CardGrid>
                  <Card>
                    <Title>Peak Hours Analysis</Title>
                    <Legend
                      items={[
                        { label: "Transactions", color: "#245388" },
                        { label: "Amount", color: "#4487cf", ring: "#e3effb" },
                        { label: "Captured Rate", color: "#9f3fe0", ring: "#fff", split: true },
                      ]}
                    />
                    <PeakChart />
                  </Card>
                  <Card>
                    <Title>Approval &amp; Failure Rates</Title>
                    <Legend
                      items={[
                        { label: "Approval Rate", color: "#43a480", ring: "#dff1ea" },
                        { label: "Failure Rate", color: "#b4566a", ring: "#f7e3e6" },
                        { label: "Approval Trend", color: "#9f3fe0", ring: "#fff", split: true },
                        { label: "Failure Trend", color: "#8b7fae", ring: "#fff" },
                      ]}
                    />
                    <RatesChart />
                  </Card>
                  <MapCard>
                    <Title>Hourly Traffic</Title>
                    <Legend inset={121} items={[{ label: "Avg", color: "#8d9096", ring: "#fff" }]} />
                    <TrafficChart />
                  </MapCard>
                  <MapCard>
                    <Title>Activity World Map</Title>
                    <Legend
                      inset={10}
                      items={[
                        { label: "Max", color: max },
                        { label: "High", color: high },
                        { label: "Med", color: med },
                        { label: "Low", color: low },
                      ]}
                    />
                    <MapFrame>
                      <WorldMap />
                    </MapFrame>
                  </MapCard>
                </CardGrid>
                <NextRow />
              </Content>
            </Body>
          </AppWindow>
          <PaymentMix />
          <VolumeOverlay>
            <Title>Volume &amp; Amount</Title>
            <Legend
              roomy
              items={[
                { label: "Captured", color: "#4dab8b" },
                { label: "Pending", color: "#d67f42" },
                { label: "Failed", color: "#b26072" },
                { label: "Refunded", color: "#7b46ad" },
                { label: "Total Amount", color: "#7d8286", split: true },
              ]}
            />
            <VolumeChart />
          </VolumeOverlay>
        </Board>
      </Stage>
    </>
  );
}
